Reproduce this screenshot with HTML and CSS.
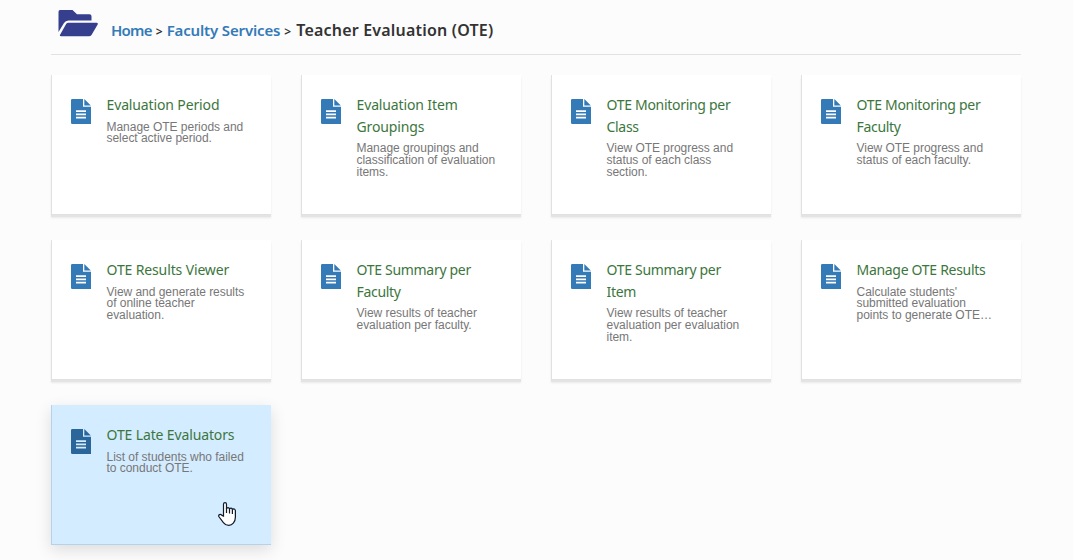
FILE: index.html
```html
<!DOCTYPE html>
<html lang="en">
<head>
  <meta charset="utf-8">
  <title>Teacher Evaluation (OTE)</title>
  <link rel="stylesheet" href="styles.css">
</head>
<body>
  <svg class="symbols">
    <symbol id="file-icon" viewBox="0 0 20 25">
      <path d="M1.2 0H12V7.8H20V25H1.2Q0 25 0 23.8V1.2Q0 0 1.2 0ZM5 11.2V13H15V11.2ZM5 14.5V16.2H15V14.5ZM5 17.7V19.4H15V17.7Z"/>
      <path d="M13.3 0L19.8 6.4H13.3Z"/>
    </symbol>
  </svg>
  <div class="container">
    <div class="page-header">
      <svg class="folder-icon" viewBox="0 0 40 27">
        <path d="M2 0H14.5L19 4.3H31.5Q33.5 4.3 33.5 6.3V10.5H10.5Q7.5 10.5 6 13L0.5 22V2Q0.5 0 2 0Z"/>
        <path d="M10.5 12.8H38.5Q40.5 12.8 39.5 14.8L33.5 25Q32.5 26.3 31 26.3H3.2Q1.2 26.3 2.2 24.5L8 14.2Q8.8 12.8 10.5 12.8Z"/>
      </svg>
      <div class="breadcrumb">
        <a href="#" class="home">Home</a><span class="sep">&gt;</span><a href="#" class="services">Faculty Services</a><span class="sep">&gt;</span><h1>Teacher Evaluation (OTE)</h1>
      </div>
    </div>
    <div class="cards">
      <div class="card">
        <svg class="icon"><use href="#file-icon"/></svg>
        <div class="card-body">
          <h2 class="loose">Evaluation Period</h2>
          <p>Manage OTE periods and<br>select active period.</p>
        </div>
      </div>
      <div class="card">
        <svg class="icon"><use href="#file-icon"/></svg>
        <div class="card-body">
          <h2 class="loose">Evaluation Item<br>Groupings</h2>
          <p>Manage groupings and<br>classification of evaluation<br>items.</p>
        </div>
      </div>
      <div class="card">
        <svg class="icon"><use href="#file-icon"/></svg>
        <div class="card-body">
          <h2>OTE Monitoring per<br>Class</h2>
          <p>View OTE progress and<br>status of each class<br>section.</p>
        </div>
      </div>
      <div class="card">
        <svg class="icon"><use href="#file-icon"/></svg>
        <div class="card-body">
          <h2>OTE Monitoring per<br>Faculty</h2>
          <p>View OTE progress and<br>status of each faculty.</p>
        </div>
      </div>
      <div class="card">
        <svg class="icon"><use href="#file-icon"/></svg>
        <div class="card-body">
          <h2 class="loose">OTE Results Viewer</h2>
          <p>View and generate results<br>of online teacher<br>evaluation.</p>
        </div>
      </div>
      <div class="card">
        <svg class="icon"><use href="#file-icon"/></svg>
        <div class="card-body">
          <h2>OTE Summary per<br>Faculty</h2>
          <p>View results of teacher<br>evaluation per faculty.</p>
        </div>
      </div>
      <div class="card">
        <svg class="icon"><use href="#file-icon"/></svg>
        <div class="card-body">
          <h2>OTE Summary per<br>Item</h2>
          <p>View results of teacher<br>evaluation per evaluation<br>item.</p>
        </div>
      </div>
      <div class="card">
        <svg class="icon"><use href="#file-icon"/></svg>
        <div class="card-body">
          <h2>Manage OTE Results</h2>
          <p>Calculate students'<br>submitted evaluation<br>points to generate OTE…</p>
        </div>
      </div>
      <div class="card active">
        <svg class="icon"><use href="#file-icon"/></svg>
        <div class="card-body">
          <h2 class="loose">OTE Late Evaluators</h2>
          <p>List of students who failed<br>to conduct OTE.</p>
        </div>
        <svg class="pointer" viewBox="0 0 18 24">
          <path d="M5.5 14V2.2Q5.5 0.6 7 0.6T8.5 2.2V7Q8.7 5.6 10 5.6T11.5 7.2Q11.7 6.1 13 6.1T14.4 7.8Q14.7 6.9 15.8 6.9T17.4 8.6V15Q17.4 19 15.3 21.2Q13.5 23.4 10.8 23.4Q7.5 23.4 5.4 20.6L1 14.8Q0.2 13.2 1.5 12.6Q2.7 12.1 4 13.4Z"/>
          <path d="M8.5 6V11M11.5 7V11.5M14.4 7.5V12"/>
        </svg>
      </div>
    </div>
  </div>
</body>
</html>
```

FILE: styles.css
```css
body {
  margin: 0;
  background-color: #fcfcfc;
  font-family: "Liberation Sans", Arial, sans-serif;
}

.symbols {
  display: none;
}

.container {
  width: 970px;
  height: 560px;
  margin-left: 51px;
}

.page-header {
  display: flex;
  align-items: flex-start;
  box-sizing: border-box;
  height: 55px;
  padding: 10px 0 0 7px;
  border-bottom: 1px solid #e2e2e2;
}

.folder-icon {
  width: 40px;
  height: 27px;
  margin-right: 13px;
  fill: #353f8e;
}

.breadcrumb {
  display: flex;
  align-items: baseline;
  padding-top: 8px;
  font-family: "Noto Sans", sans-serif;
  font-weight: 600;
  font-size: 15px;
  line-height: 24px;
  white-space: nowrap;
}

.breadcrumb a {
  color: #337ab7;
  text-decoration: none;
}

.breadcrumb .home {
  letter-spacing: -0.75px;
}

.breadcrumb .services {
  letter-spacing: -0.15px;
}

.breadcrumb .sep {
  margin: 0 4px;
  font-size: 12px;
  color: #333;
}

h1 {
  margin: 0 0 0 1px;
  font-size: 16px;
  font-weight: 600;
  letter-spacing: 0.2px;
  color: #333;
}

.cards {
  display: grid;
  grid-template-columns: repeat(4, 220px);
  gap: 25px 30px;
  padding-top: 20px;
}

.card {
  position: relative;
  display: flex;
  box-sizing: border-box;
  height: 140px;
  padding: 19px 0 0 19px;
  border-left: 1px solid #e1e1e1;
  border-bottom: 1px solid #e1e1e1;
  background-color: #fff;
  box-shadow: 0 2px 0 #e4e4e4, 0 3px 2px rgba(0, 0, 0, 0.08);
}

.icon {
  flex: none;
  width: 20px;
  height: 25px;
  margin: 5px 15.5px 0 0;
  fill: #337ab7;
}

h2 {
  margin: 0;
  font-family: "Noto Sans", sans-serif;
  font-size: 14px;
  font-weight: 400;
  line-height: 21.7px;
  letter-spacing: -0.3px;
  color: #3c763d;
  white-space: nowrap;
}

h2.loose {
  letter-spacing: -0.13px;
}

p {
  margin: 6px 0 0;
  font-size: 12px;
  line-height: 11.7px;
  letter-spacing: -0.03px;
  color: #777;
  white-space: nowrap;
}

.card.active {
  border-left-color: #b5d2e8;
  border-bottom-color: #b5d2e8;
  background-color: #d4ecff;
  box-shadow: 0 5px 15px rgba(0, 0, 0, 0.13);
}

.active .icon {
  fill: #2b669a;
}

.pointer {
  position: absolute;
  left: 166px;
  top: 97px;
  width: 18px;
  height: 24px;
  fill: #fff;
  stroke: #111827;
  stroke-width: 1.2;
}
```
